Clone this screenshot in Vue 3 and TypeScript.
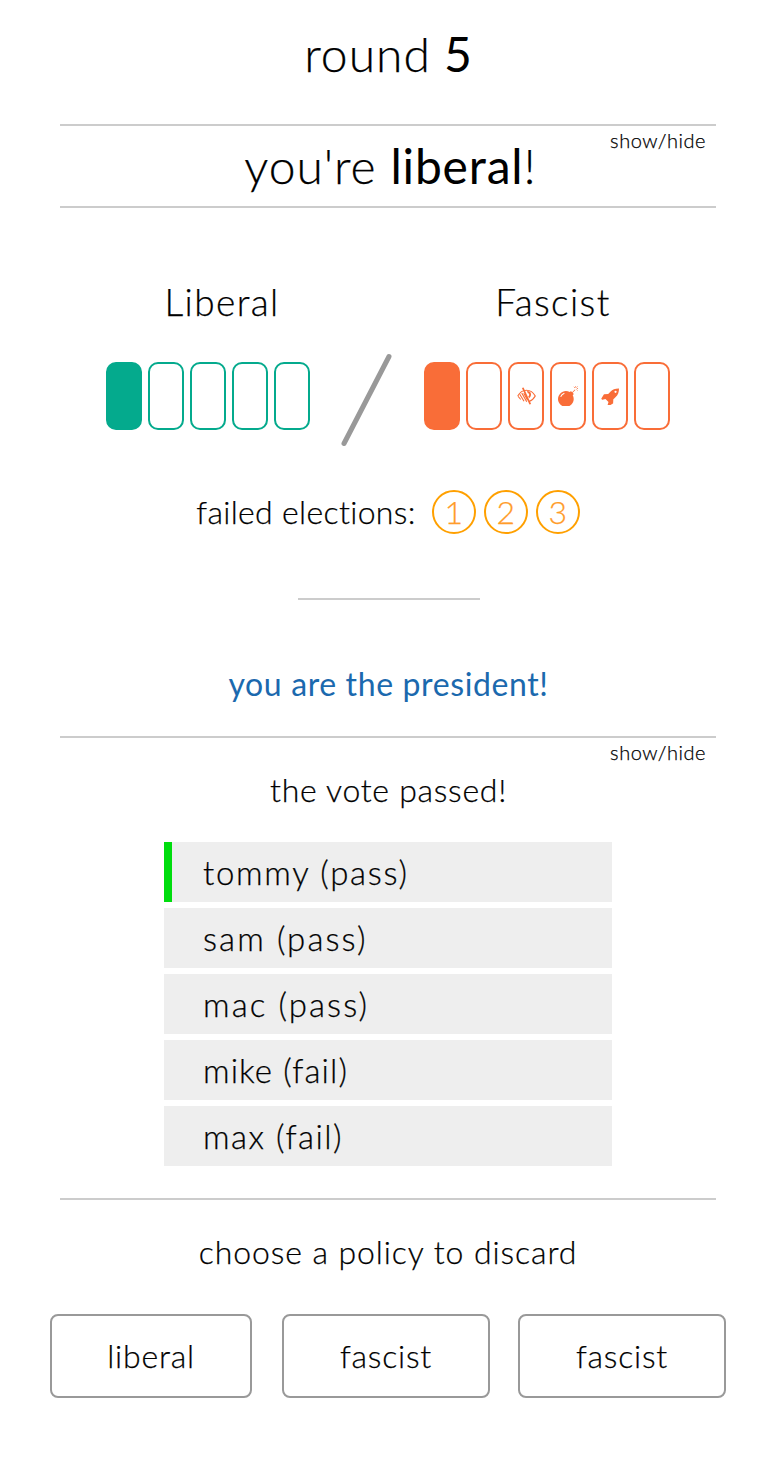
<script setup lang="ts">
interface Vote {
  name: string
  result: 'pass' | 'fail'
  current?: boolean
}

type Power = 'peek' | 'bomb' | 'rocket'

interface Slot {
  filled: boolean
  power?: Power
}

const round = 5
const role = 'liberal'

const liberalSlots: Slot[] = [1, 2, 3, 4, 5].map((n) => ({ filled: n === 1 }))
const fascistSlots: Slot[] = [
  { filled: true },
  { filled: false },
  { filled: false, power: 'peek' },
  { filled: false, power: 'bomb' },
  { filled: false, power: 'rocket' },
  { filled: false },
]

const votes: Vote[] = [
  { name: 'tommy', result: 'pass', current: true },
  { name: 'sam', result: 'pass' },
  { name: 'mac', result: 'pass' },
  { name: 'mike', result: 'fail' },
  { name: 'max', result: 'fail' },
]

const policies = ['liberal', 'fascist', 'fascist']
</script>

<template>
  <main class="game">
    <h1 class="round"><span class="word">round</span><b>{{ round }}</b></h1>

    <section class="role">
      <button class="toggle">show/hide</button>
      <p class="role-text"><span class="youre">you're</span><b>{{ role }}</b><span>!</span></p>
    </section>

    <section class="board">
      <div class="track liberal">
        <h2>Liberal</h2>
        <div class="slots">
          <span v-for="(s, i) in liberalSlots" :key="i" class="slot" :class="{ filled: s.filled }"></span>
        </div>
      </div>
      <svg class="slash" width="54" height="98" viewBox="0 0 54 98">
        <path d="M4 92.500 49 5.500" stroke="#999" stroke-width="5" stroke-linecap="round" />
      </svg>
      <div class="track fascist">
        <h2>Fascist</h2>
        <div class="slots">
          <span v-for="(s, i) in fascistSlots" :key="i" class="slot" :class="{ filled: s.filled }">
            <svg v-if="s.power === 'peek'" class="peek" viewBox="0 0 38 36">
              <g fill="none" stroke="currentColor">
                <path d="M1.500 18C6 10 12 6.500 19 6.500S32 10 36.500 18C33.500 23.500 29 27.500 24 29" stroke-width="2.400" />
                <path d="M11.500 1.500 26.500 34.500" stroke-width="3.600" />
                <path d="M2 18.500 7.500 25M5.500 14.500 14 28.500M9.500 12 19.500 29.500M13.500 12.500 21 26" stroke-width="2.300" />
              </g>
              <path d="M20 8c8-1 11.500 9 4 14.500L22.500 19c3-2 2.500-6-1-7z" fill="currentColor" />
            </svg>
            <svg v-else-if="s.power === 'bomb'" class="bomb" viewBox="0 0 1792 1792">
              <path transform="matrix(1 0 0 -1 0 1664)" fill="currentColor" d="M1513 1356l46 -46l-244 -243l68 -68q19 -19 19 -45.500t-19 -45.500l-64 -64q89 -161 89 -343q0 -143 -55.500 -273.500t-150 -225t-225 -150t-273.500 -55.500t-273.500 55.500t-225 150t-150 225t-55.500 273.500t55.500 273.500t150 225t225 150t273.500 55.500q182 0 343 -89l64 64q19 19 45.500 19t45.500 -19l68 -68z" />
              <path d="M1510 165 1420 75M1750 410 1660 320M1696 220H1792M1568 30V130M1750 35 1650 135" fill="none" stroke="currentColor" stroke-width="75" />
              <path d="M265 930Q335 735 535 665" fill="none" stroke="#fff" stroke-width="100" stroke-linecap="round" />
            </svg>
            <svg v-else-if="s.power === 'rocket'" class="rocket" viewBox="0 0 1664 1664">
              <path transform="matrix(1 0 0 -1 0 1536)" fill="currentColor" d="M1664 1376q0 -249 -75.500 -430.500t-253.500 -360.500q-81 -80 -195 -176l-20 -379q-2 -16 -16 -26l-384 -224q-7 -4 -16 -4q-12 0 -23 9l-64 64q-13 14 -8 32l85 276l-281 281l-276 -85q-3 -1 -9 -1q-14 0 -23 9l-64 64q-17 19 -5 39l224 384q10 14 26 16l379 20q96 114 176 195q188 187 358 258t431 71q14 0 24 -9.500t10 -22.500z" />
              <circle cx="1344" cy="448" r="105" fill="#fff" />
            </svg>
          </span>
        </div>
      </div>
    </section>

    <section class="failed">
      <span class="label">failed elections:</span>
      <span v-for="n in 3" :key="n" class="count">{{ n }}</span>
    </section>

    <hr class="divider" />

    <p class="president">you are the president!</p>

    <section class="votes">
      <button class="toggle">show/hide</button>
      <p class="result">the vote passed!</p>
      <ul>
        <li v-for="v in votes" :key="v.name" :class="{ current: v.current }">{{ v.name }} ({{ v.result }})</li>
      </ul>
    </section>

    <p class="prompt">choose a policy to discard</p>
    <div class="policies">
      <button v-for="(p, i) in policies" :key="i" :class="p">{{ p }}</button>
    </div>
  </main>
</template>

<style>
body {
  margin: 0;
  background: #fff;
}
</style>

<style scoped>
.game {
  box-sizing: border-box;
  width: 768px;
  height: 1458px;
  padding: 24px 52px 0 60px;
  overflow: hidden;
  color: #000;
  font: 300 32px/40px Lato, 'Open Sans', sans-serif;
  text-align: center;
  -webkit-text-stroke: 0.25px currentColor;
}
h1, h2, p, ul {
  margin: 0;
  padding: 0;
  font-weight: 300;
}
button {
  padding: 0;
  border: 0;
  background: none;
  color: inherit;
  font: inherit;
  -webkit-text-stroke: inherit;
}
b {
  font-weight: 400;
  -webkit-text-stroke: 0;
}
.round {
  display: flex;
  justify-content: center;
  height: 100px;
  font-size: 48px;
  line-height: 60px;
}
.round .word {
  margin-right: 13px;
  letter-spacing: 1px;
}
.role {
  position: relative;
  height: 80px;
  border-top: 2px solid #ccc;
  border-bottom: 2px solid #ccc;
}
.role-text {
  display: flex;
  justify-content: center;
  padding-left: 4px;
  font-size: 48px;
  line-height: 80px;
}
.youre {
  margin-right: 14px;
  letter-spacing: 0.9px;
}
.role-text b {
  letter-spacing: 0.8px;
}
.toggle {
  position: absolute;
  top: 2px;
  right: 10px;
  font-size: 20px;
  line-height: 24px;
  letter-spacing: 0.55px;
}
.board {
  display: flex;
  justify-content: center;
  height: 282px;
  padding-top: 74px;
  box-sizing: border-box;
}
.track h2 {
  height: 80px;
  font-size: 37px;
  line-height: 39px;
  letter-spacing: 1.4px;
}
.track.liberal h2 {
  width: 232px;
  margin-right: -28px;
}
.track.fascist h2 {
  padding-left: 12px;
}
.slots {
  display: flex;
  gap: 6px;
}
.slot {
  display: flex;
  align-items: center;
  justify-content: center;
  box-sizing: border-box;
  width: 36px;
  height: 68px;
  border: 2px solid currentColor;
  border-radius: 10px;
}
.liberal .slots {
  color: #04aa8d;
}
.fascist .slots {
  color: #f96d38;
}
.filled {
  background: currentColor;
}
.slash {
  flex: none;
  width: 54px;
  margin: 69px 30px 0;
}
.slot svg {
  margin-bottom: 1px;
}
.peek {
  width: 19px;
  height: 18px;
}
.bomb {
  width: 20px;
  height: 20px;
}
.rocket {
  width: 18px;
  height: 18px;
}
.failed {
  display: flex;
  align-items: center;
  justify-content: center;
  height: 44px;
  gap: 8px;
}
.label {
  margin-right: 8px;
  letter-spacing: 0.33px;
}
.count {
  box-sizing: border-box;
  width: 44px;
  height: 44px;
  border: 2px solid #ffa000;
  border-radius: 50%;
  color: #ff9c2a;
  line-height: 39px;
}
.divider {
  width: 182px;
  height: 2px;
  margin: 64px 0 0 238px;
  border: 0;
  background: #ccc;
}
.president {
  height: 72px;
  margin-top: 64px;
  padding-left: 1px;
  color: #1b69ae;
  font-weight: 400;
  letter-spacing: 0.62px;
  -webkit-text-stroke: 0;
}
.votes {
  position: relative;
  height: 460px;
  border-top: 2px solid #ccc;
  border-bottom: 2px solid #ccc;
}
.result {
  padding-top: 32px;
  padding-left: 1px;
  letter-spacing: 0.72px;
}
.votes ul {
  display: grid;
  gap: 6px;
  width: 448px;
  margin: 32px auto 0 104px;
  list-style: none;
}
.votes li {
  box-sizing: border-box;
  height: 60px;
  padding-left: 39px;
  background: #eee;
  font-size: 33px;
  line-height: 60px;
  text-align: left;
  letter-spacing: 1.7px;
}
.votes li:nth-child(2),
.votes li:nth-child(3) {
  letter-spacing: 2.1px;
}
.votes li:nth-child(4) {
  letter-spacing: 1.1px;
}
.votes li:nth-child(5) {
  letter-spacing: 1.5px;
}
.votes li.current {
  padding-left: 31px;
  border-left: 8px solid #00dd0e;
}
.prompt {
  height: 82px;
  margin-top: 32px;
  letter-spacing: 0.92px;
}
.policies {
  display: flex;
  gap: 28px;
  margin: 0 -10px;
}
.policies button {
  box-sizing: border-box;
  width: 208px;
  height: 84px;
  border: 2px solid #999;
  border-radius: 8px;
  letter-spacing: 0.8px;
}
.policies .liberal {
  width: 202px;
  margin-right: 2px;
}
</style>
